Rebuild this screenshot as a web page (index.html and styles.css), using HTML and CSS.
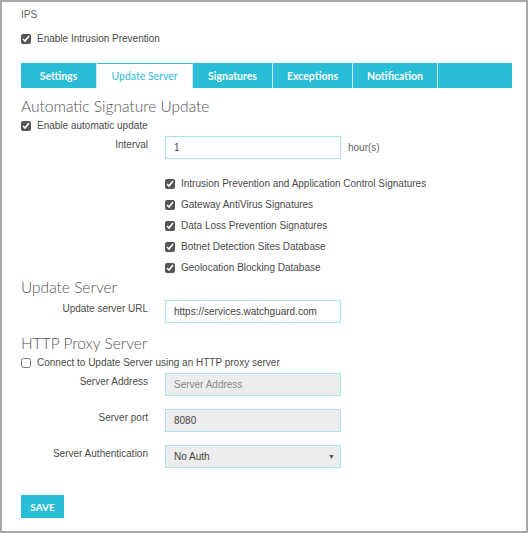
FILE: index.html
```html
<!DOCTYPE html>
<html lang="en">
<head>
    <meta charset="UTF-8">
    <title>IPS</title>
    <link rel="stylesheet" href="styles.css">
</head>
<body>
    <div class="frame">
        <div class="page-title">IPS</div>
        <label class="check top-check">
            <input type="checkbox" checked>
            <span>Enable Intrusion Prevention</span>
        </label>

        <div class="tabs">
            <div class="tab" style="width: 76px">Settings</div>
            <div class="tab active" style="width: 96px">Update Server</div>
            <div class="tab" style="width: 80px">Signatures</div>
            <div class="tab" style="width: 80px">Exceptions</div>
            <div class="tab" style="width: 85px">Notification</div>
            <div class="tab filler"></div>
        </div>

        <h2 class="first">Automatic Signature Update</h2>
        <label class="check">
            <input type="checkbox" checked>
            <span>Enable automatic update</span>
        </label>

        <div class="row interval-row">
            <div class="row-label">Interval</div>
            <input class="field" type="text" value="1">
            <span class="unit">hour(s)</span>
        </div>

        <div class="sig-list">
            <label class="check"><input type="checkbox" checked><span>Intrusion Prevention and Application Control Signatures</span></label>
            <label class="check"><input type="checkbox" checked><span>Gateway AntiVirus Signatures</span></label>
            <label class="check"><input type="checkbox" checked><span>Data Loss Prevention Signatures</span></label>
            <label class="check"><input type="checkbox" checked><span>Botnet Detection Sites Database</span></label>
            <label class="check"><input type="checkbox" checked><span>Geolocation Blocking Database</span></label>
        </div>

        <h2>Update Server</h2>
        <div class="row url-row">
            <div class="row-label">Update server URL</div>
            <input class="field" type="text" value="https://services.watchguard.com">
        </div>

        <h2 class="proxy">HTTP Proxy Server</h2>
        <label class="check">
            <input type="checkbox">
            <span>Connect to Update Server using an HTTP proxy server</span>
        </label>

        <div class="row proxy-first">
            <div class="row-label">Server Address</div>
            <input class="field disabled" type="text" placeholder="Server Address">
        </div>
        <div class="row">
            <div class="row-label">Server port</div>
            <input class="field disabled" type="text" value="8080">
        </div>
        <div class="row">
            <div class="row-label">Server Authentication</div>
            <div class="field disabled select">
                <span>No Auth</span>
                <span class="arrow">&#9660;</span>
            </div>
        </div>

        <button class="save">SAVE</button>
    </div>
</body>
</html>
```

FILE: styles.css
```css
body {
    margin: 0;
    font-family: "Liberation Sans", Arial, sans-serif;
    color: #555;
    background: #fff;
}

.frame {
    width: 528px;
    height: 533px;
    box-sizing: border-box;
    border: 2px solid #a8a8a8;
    padding: 7px 0 0 19px;
}

.page-title {
    font-size: 10px;
    color: #666;
    height: 16px;
}

.check {
    display: flex;
    align-items: center;
    font-size: 10px;
    color: #4a4a4a;
    height: 21px;
}

.check input {
    width: 10px;
    height: 10px;
    margin: 0 6px 0 0;
    accent-color: #555;
}

.top-check {
    margin-top: 3px;
}

.tabs {
    display: flex;
    width: 491px;
    height: 25px;
    margin-top: 14px;
    background: #2abdd8;
}

.tab {
    box-sizing: border-box;
    display: flex;
    align-items: center;
    justify-content: center;
    color: #fff;
    font-family: Lato, sans-serif;
    font-weight: bold;
    font-size: 10.5px;
    border-right: 1px solid #c9eef5;
}

.tab.active {
    background: #fff;
    color: #2abdd8;
    font-weight: normal;
    border-top: 1px solid #2abdd8;
}

.tab.filler {
    flex: 1;
    border-right: none;
}

h2 {
    font-family: Lato, sans-serif;
    font-weight: 300;
    font-size: 15.5px;
    color: #555;
    margin: 0;
    height: 18px;
    line-height: 18px;
}

h2.first {
    margin-top: 9px;
}

h2.proxy {
    margin-top: 11px;
}

.row {
    display: flex;
    align-items: flex-start;
    margin-top: 13px;
    height: 23px;
}

.interval-row {
    margin-top: 0;
}

.url-row {
    margin-top: 4px;
}

.proxy-first {
    margin-top: 0;
}

.row-label {
    width: 127px;
    text-align: right;
    font-size: 10px;
    line-height: 12px;
    padding-top: 3px;
    color: #4a4a4a;
    margin-right: 17px;
}

.field {
    box-sizing: border-box;
    width: 176px;
    height: 23px;
    border: 1px solid #a9e3ec;
    padding: 0 8px;
    font-family: "Liberation Sans", Arial, sans-serif;
    font-size: 10px;
    color: #444;
    background: #fff;
}

.field.disabled {
    background: #ededed;
}

.field::placeholder {
    color: #888;
}

.unit {
    font-size: 10px;
    line-height: 12px;
    padding-top: 6px;
    color: #666;
    margin-left: 7px;
}

.sig-list {
    margin: 14px 0 0 144px;
}

.select {
    display: flex;
    align-items: center;
    justify-content: space-between;
    padding-right: 5px;
}

.arrow {
    font-size: 7px;
    color: #555;
}

.save {
    display: block;
    margin-top: 27px;
    width: 43px;
    height: 23px;
    border: none;
    background: #2abdd8;
    color: #fff;
    font-family: Lato, sans-serif;
    font-weight: bold;
    font-size: 10px;
    padding: 0;
}
```
